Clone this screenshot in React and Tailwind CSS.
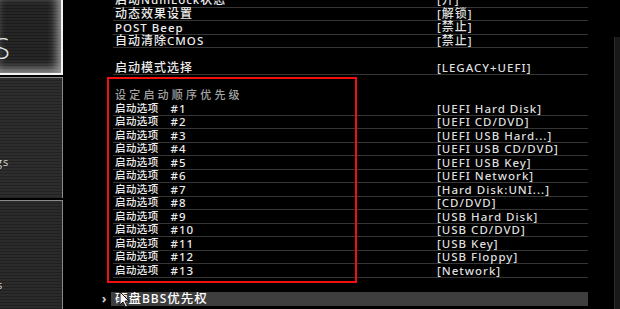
const top = [
  { label: "启动NumLock状态", value: "[开]" },
  { label: "动态效果设置", value: "[解锁]" },
  { label: "POST Beep", value: "[禁止]" },
  { label: "自动清除CMOS", value: "[禁止]" },
];

const boot = [
  "[UEFI Hard Disk]",
  "[UEFI CD/DVD]",
  "[UEFI USB Hard...]",
  "[UEFI USB CD/DVD]",
  "[UEFI USB Key]",
  "[UEFI Network]",
  "[Hard Disk:UNI...]",
  "[CD/DVD]",
  "[USB Hard Disk]",
  "[USB CD/DVD]",
  "[USB Key]",
  "[USB Floppy]",
  "[Network]",
];

function Mixed({ text, cjk }) {
  return text.split(/([\u4e00-\u9fff]+)/).map((part, i) =>
    /[\u4e00-\u9fff]/.test(part) ? (
      <span key={i} className={cjk}>
        {part}
      </span>
    ) : (
      <span key={i}>{part}</span>
    )
  );
}

function Row({ label, value, cjk = "text-[12px]", line = true }) {
  return (
    <div
      className={`ml-[15px] flex h-[13.5px] items-center leading-none ${
        line ? "border-b border-[#363636]" : ""
      }`}
    >
      <div className="w-[324px] pl-[2px] text-[#ececec]">
        <Mixed text={label} cjk={cjk} />
      </div>
      <div className="text-[#dedede]">
        <Mixed text={value} cjk="text-[12px]" />
      </div>
    </div>
  );
}

function SidePanel() {
  return (
    <div className="flex h-[309px] w-[63px] shrink-0 flex-col overflow-hidden font-['Open_Sans',sans-serif] font-normal">
      <div className="h-[75px] shrink-0 overflow-hidden border-r-2 border-b-2 border-[#f2f2f2] bg-[repeating-linear-gradient(180deg,#262626_0px,#262626_2px,#1b1b1b_2px,#1b1b1b_3px)] shadow-[inset_-4px_-4px_10px_rgba(255,255,255,0.55)]">
        <div className="ml-[-6px] mt-[33px] text-[29px] font-light leading-none text-[#e4e4e4]">S</div>
      </div>
      <div className="mt-[2px] h-[121px] shrink-0 overflow-hidden border-t border-r border-[#8a8a8a] bg-[repeating-linear-gradient(180deg,#2d2d2d_0px,#2d2d2d_2px,#222_2px,#222_3px)]">
        <div className="ml-[-4px] mt-[78px] text-[11px] leading-none text-[#d8d8d8]">gs</div>
      </div>
      <div className="mt-[2px] flex-1 overflow-hidden border-t border-r border-[#8a8a8a] bg-[repeating-linear-gradient(180deg,#2b2b2b_0px,#2b2b2b_2px,#202020_2px,#202020_3px)]">
        <div className="ml-[-3px] mt-[78px] text-[11px] leading-none text-[#d8d8d8]">s</div>
      </div>
    </div>
  );
}

export default function App() {
  return (
    <div className="relative flex h-[309px] w-[620px] overflow-hidden bg-black font-['Noto_Sans','Noto_Sans_CJK_SC',sans-serif] text-[11.5px] font-medium tracking-[1px]">
      <SidePanel />

      <div className="ml-[35px] mt-[-6px] flex w-[490px] shrink-0 flex-col">
        {top.map((r) => (
          <Row key={r.label} label={r.label} value={r.value} />
        ))}
        <div className="h-[13.5px]" />
        <Row label="启动模式选择" value="[LEGACY+UEFI]" />

        <div className="ml-[15px] mt-[11.5px] flex h-[15.5px] items-center pl-[2px] text-[11px] leading-none tracking-[3.2px] text-[#a3a3a3]">
          设定启动顺序优先级
        </div>
        {boot.map((v, i) => (
          <div key={i} className="ml-[15px] flex h-[13.5px] items-center border-b border-[#363636] leading-none">
            <div className="flex w-[324px] pl-[2px] text-[#ececec]">
              <span className="text-[10.5px] tracking-[0.4px]">启动选项</span>
              <span className="ml-[12px]">#{i + 1}</span>
            </div>
            <div className="text-[#dedede]">{v}</div>
          </div>
        ))}

        <div className="mt-[14.5px] flex h-[13.5px] items-center leading-none">
          <span className="w-[13px] text-center text-[13px] font-bold text-[#cfcfcf]">›</span>
          <div className="flex h-full flex-1 items-center bg-[#3e3e3e] pl-[4px] text-[12px] text-white">
            <Mixed text="硬盘BBS优先权" cjk="text-[12.5px]" />
          </div>
        </div>
      </div>

      <div className="ml-[26px] mt-[37px] w-[6px] shrink-0 border-l border-[#2c2c2c] bg-[#191919]" />

      <div className="pointer-events-none absolute left-[107px] top-[77px] h-[206px] w-[250px] border-2 border-[#f01010]" />

      <svg className="absolute left-[119px] top-[291px]" width="11" height="17" viewBox="0 0 11 17">
        <path d="M1 1 L1 14 L4 11 L6.5 16 L8.5 15 L6 10 L10 10 Z" fill="#f4f4f4" stroke="#111" strokeWidth="1" strokeLinejoin="round" />
      </svg>
    </div>
  );
}
